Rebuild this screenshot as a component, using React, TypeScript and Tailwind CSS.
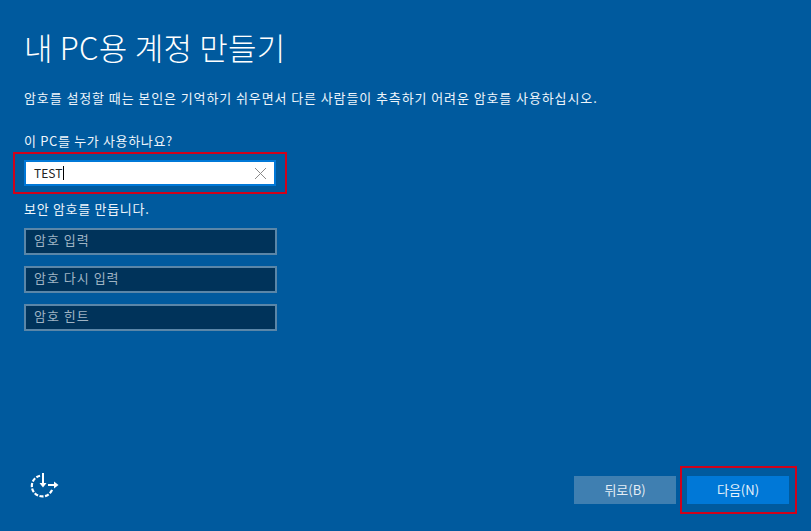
const FONT = "font-['Noto_Sans_CJK_KR','Noto_Sans',sans-serif]";

const passwordFields = ["암호 입력", "암호 다시 입력", "암호 힌트"];

const AccessibilityIcon = () => (
  <svg width="32" height="28" viewBox="0 0 32 28" fill="none" stroke="white" strokeWidth="2.200" className="block">
    <path d="M12 3.700A10.500 10.500 0 1 0 24.200 17.500" strokeDasharray="4 1.500" />
    <path d="M15 1v11" strokeWidth="2" />
    <path d="M11.500 11h7L15 15.500z" fill="white" stroke="none" />
    <path d="M20 13h7" strokeWidth="2" />
    <path d="M26 9.500v7l4.500-3.500z" fill="white" stroke="none" />
  </svg>
);

const App = () => (
  <div className={`${FONT} flex h-[531px] w-[811px] flex-col overflow-hidden bg-[#005a9e] pl-6 text-white`}>
    <h1 className="mt-[25px] h-[44px] text-[31px] font-light leading-[44px] tracking-[0.25px]">내 PC용 계정 만들기</h1>
    <p className="mt-[19px] h-[20px] text-[13px] leading-[20px] tracking-[0.9px] text-[#eef5fb]">
      암호를 설정할 때는 본인은 기억하기 쉬우면서 다른 사람들이 추측하기 어려운 암호를 사용하십시오.
    </p>
    <label className="mt-[23px] h-[20px] text-[13px] leading-[20px] tracking-[0.65px] text-[#eef5fb]">이 PC를 누가 사용하나요?</label>

    <div className="-ml-[11px] mt-[1px] w-[274px] border-2 border-[#d0021b] px-[9px] py-[6px]">
      <div className="flex h-[26px] w-[252px] items-center justify-between border-2 border-[#0078d7] bg-white pl-2 pr-[7px]">
        <span className="flex items-center text-[12px] text-[#222]">
          TEST
          <span className="ml-[1px] h-[14px] w-px bg-black" />
        </span>
        <svg width="13" height="13" viewBox="0 0 13 13" stroke="#8a8a8a" strokeWidth="1">
          <path d="M1 1l11 11M12 1L1 12" />
        </svg>
      </div>
    </div>

    <p className="mt-[5px] h-[20px] text-[13px] leading-[20px] tracking-[0.7px] text-[#eef5fb]">보안 암호를 만듭니다.</p>

    <div className="mt-[9px] flex flex-col gap-[11px]">
      {passwordFields.map((field) => (
        <div
          key={field}
          className="flex h-[27px] w-[253px] items-center border-2 border-[#5a86a8] bg-[#00335a] pb-[3px] pl-2 text-[13px] tracking-[1px] text-[#9fb4c4]"
        >
          {field}
        </div>
      ))}
    </div>

    <div className="mb-[17px] mr-[14px] mt-auto flex items-center justify-between">
      <div className="mb-[8px] ml-[4px]">
        <AccessibilityIcon />
      </div>
      <div className="flex items-center gap-[4px]">
        <button className="h-[28px] w-[102px] bg-[#3f7fb1] text-[13px] text-[#e3edf5]">뒤로(B)</button>
        <div className="border-2 border-[#d0021b] py-[6px] pl-[5px] pr-[6px]">
          <button className="my-[2px] block h-[28px] w-[102px] bg-[#0078d7] text-[13px] text-[#e6f2fb]">다음(N)</button>
        </div>
      </div>
    </div>
  </div>
);

export default App;
